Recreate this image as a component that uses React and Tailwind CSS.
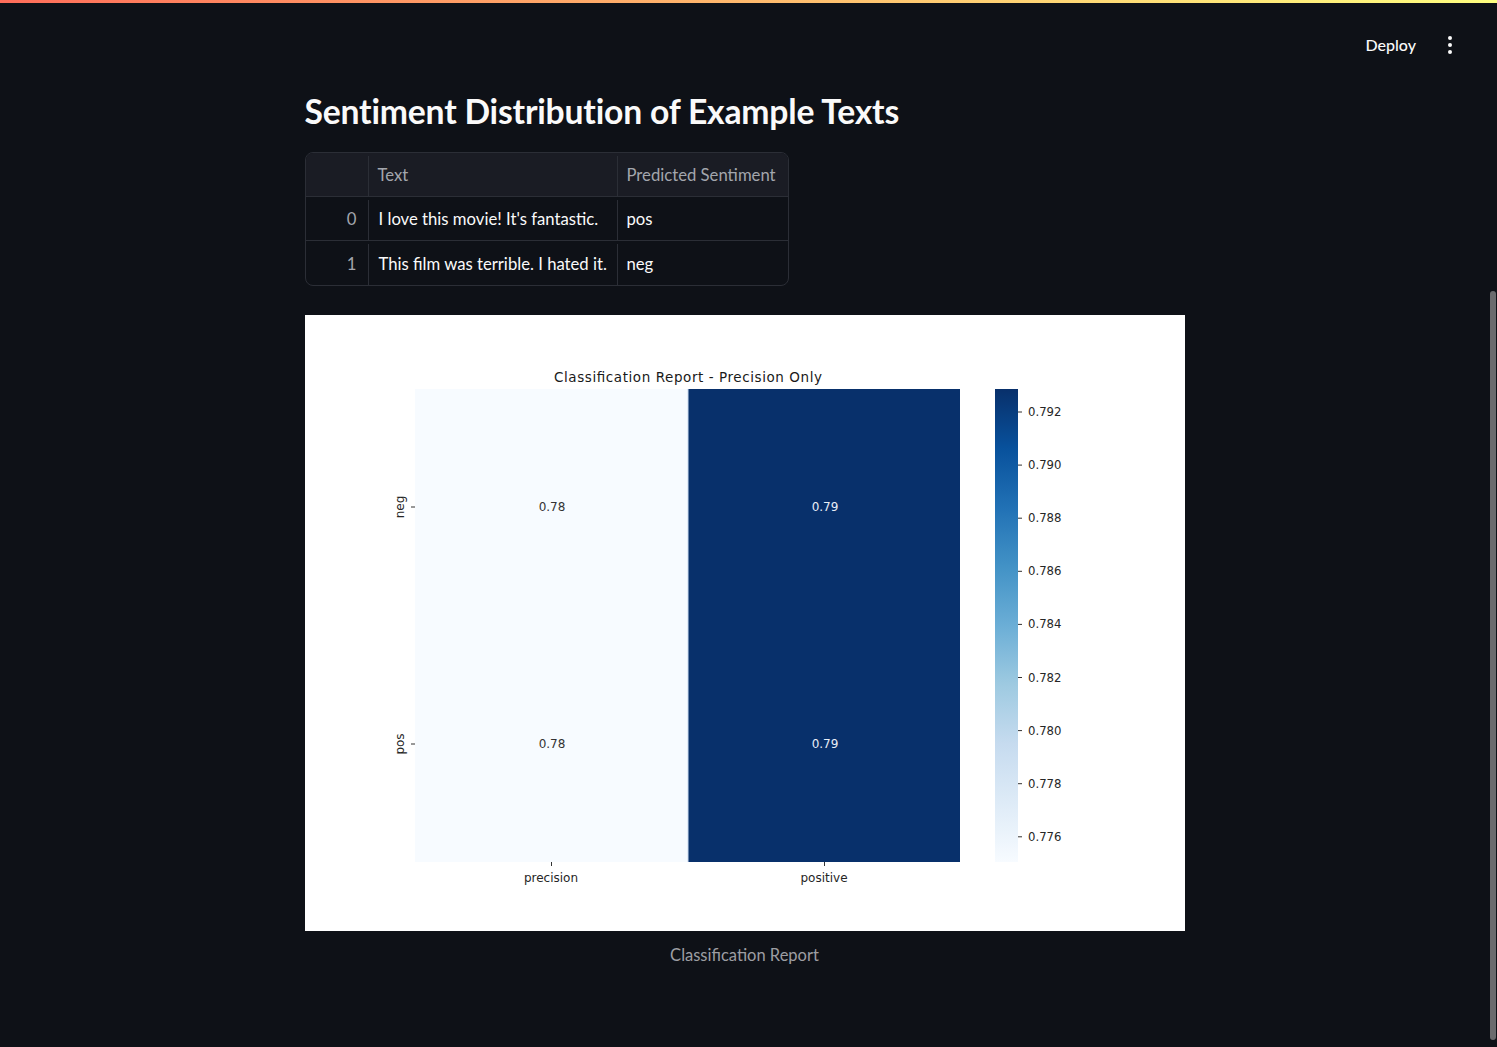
const ui = { fontFamily: '"Lato", "Noto Sans", sans-serif' };
const mpl = '"DejaVu Sans", sans-serif';

function Heatmap() {
  const stops = ['#f7fbff', '#deebf7', '#c6dbef', '#9ecae1', '#6baed6', '#4292c6', '#2171b5', '#08519c', '#08306b'];
  const ticks = ['0.792', '0.790', '0.788', '0.786', '0.784', '0.782', '0.780', '0.778', '0.776'];
  return (
    <svg width="880" height="616" viewBox="0 0 880 616" className="block">
      <defs>
        <linearGradient id="blues" x1="0" y1="1" x2="0" y2="0">
          {stops.map((c, i) => (
            <stop key={i} offset={i / (stops.length - 1)} stopColor={c} />
          ))}
        </linearGradient>
      </defs>
      <rect width="880" height="616" fill="#ffffff" />
      <text x="383" y="67" textAnchor="middle" fontFamily={mpl} fontSize="13.5" fill="#1a1a1a" textLength="268">
        Classification Report - Precision Only
      </text>
      <rect x="110" y="74" width="273" height="473" fill="#f7fbff" />
      <rect x="383" y="74" width="272" height="473" fill="#08306b" />
      <line x1="383" y1="74" x2="383" y2="547" stroke="#c9d9ef" strokeWidth="1" />
      {[192, 429].map((y) => (
        <g key={y}>
          <text x="247" y={y + 4} textAnchor="middle" fontFamily={mpl} fontSize="12" fill="#333333">0.78</text>
          <text x="520" y={y + 4} textAnchor="middle" fontFamily={mpl} fontSize="12" fill="#e8eef7">0.79</text>
          <line x1="106" y1={y} x2="110" y2={y} stroke="#333" strokeWidth="1" />
        </g>
      ))}
      <text transform="translate(99 192) rotate(-90)" textAnchor="middle" fontFamily={mpl} fontSize="12" fill="#262626">neg</text>
      <text transform="translate(99 429) rotate(-90)" textAnchor="middle" fontFamily={mpl} fontSize="12" fill="#262626">pos</text>
      <line x1="246.5" y1="547" x2="246.5" y2="551" stroke="#333" strokeWidth="1" />
      <line x1="519.5" y1="547" x2="519.5" y2="551" stroke="#333" strokeWidth="1" />
      <text x="246" y="567" textAnchor="middle" fontFamily={mpl} fontSize="12" fill="#262626">precision</text>
      <text x="519" y="567" textAnchor="middle" fontFamily={mpl} fontSize="12" fill="#262626">positive</text>
      <rect x="690" y="74" width="23" height="473" fill="url(#blues)" />
      {ticks.map((t, i) => {
        const y = 97 + i * 53.1;
        return (
          <g key={t}>
            <line x1="713" y1={y} x2="717" y2={y} stroke="#333" strokeWidth="1" />
            <text x="723" y={y + 4} fontFamily={mpl} fontSize="11.7" fill="#262626">{t}</text>
          </g>
        );
      })}
    </svg>
  );
}

export default function App() {
  const rows = [
    ['0', "I love this movie! It's fantastic.", 'pos'],
    ['1', 'This film was terrible. I hated it.', 'neg'],
  ];
  return (
    <div className="relative w-full h-[1047px] overflow-hidden bg-[#0e1117] text-[#fafafa]" style={ui}>
      <div className="h-[3px] bg-gradient-to-r from-[#ff6d5a] to-[#ffff80]" />
      <header className="h-[87px] flex justify-end items-start pt-[30px] pr-[43px]">
        <div className="flex items-center gap-[30px]">
          <span className="text-[16px] leading-6 font-medium">Deploy</span>
          <div className="flex flex-col gap-[3px] items-center w-[8px]">
            <span className="w-[4px] h-[4px] rounded-full bg-[#fafafa]" />
            <span className="w-[4px] h-[4px] rounded-full bg-[#fafafa]" />
            <span className="w-[4px] h-[4px] rounded-full bg-[#fafafa]" />
          </div>
        </div>
      </header>
      <main className="flex justify-center pr-[8px]">
        <div className="w-[880px] flex flex-col">
          <h2 className="text-[33.7px] leading-[43px] font-bold tracking-[-0.2px]">Sentiment Distribution of Example Texts</h2>
          <div className="mt-[19px] w-[484px] rounded-[8px] border border-[#2b2e36] overflow-hidden text-[16.7px]">
            <div className="flex h-[44px] pt-[3px] bg-[#1a1c24] text-[#a3a6ad] border-b border-[#2b2e36]">
              <div className="w-[63px] border-r border-[#2b2e36]" />
              <div className="w-[249px] border-r border-[#2b2e36] flex items-center px-[9px]">Text</div>
              <div className="flex-1 flex items-center px-[9px]">Predicted Sentiment</div>
            </div>
            {rows.map((r, i) => (
              <div key={r[0]} className={`flex h-[44px] pt-[3px] ${i === 0 ? 'border-b border-[#2b2e36]' : ''}`}>
                <div className="w-[63px] border-r border-[#2b2e36] flex items-center justify-end pr-[11px] text-[#a3a6ad]">{r[0]}</div>
                <div className="w-[249px] border-r border-[#2b2e36] flex items-center px-[10px] whitespace-nowrap">{r[1]}</div>
                <div className="flex-1 flex items-center px-[9px]">{r[2]}</div>
              </div>
            ))}
          </div>
          <div className="mt-[29px]">
            <Heatmap />
          </div>
          <p className="mt-[12px] text-center text-[16.5px] leading-6 text-[#9d9ea3]">Classification Report</p>
        </div>
      </main>
      <div className="absolute right-[1px] top-[291px] w-[6px] h-[749px] rounded-full bg-[#6b6b6e]" />
    </div>
  );
}
